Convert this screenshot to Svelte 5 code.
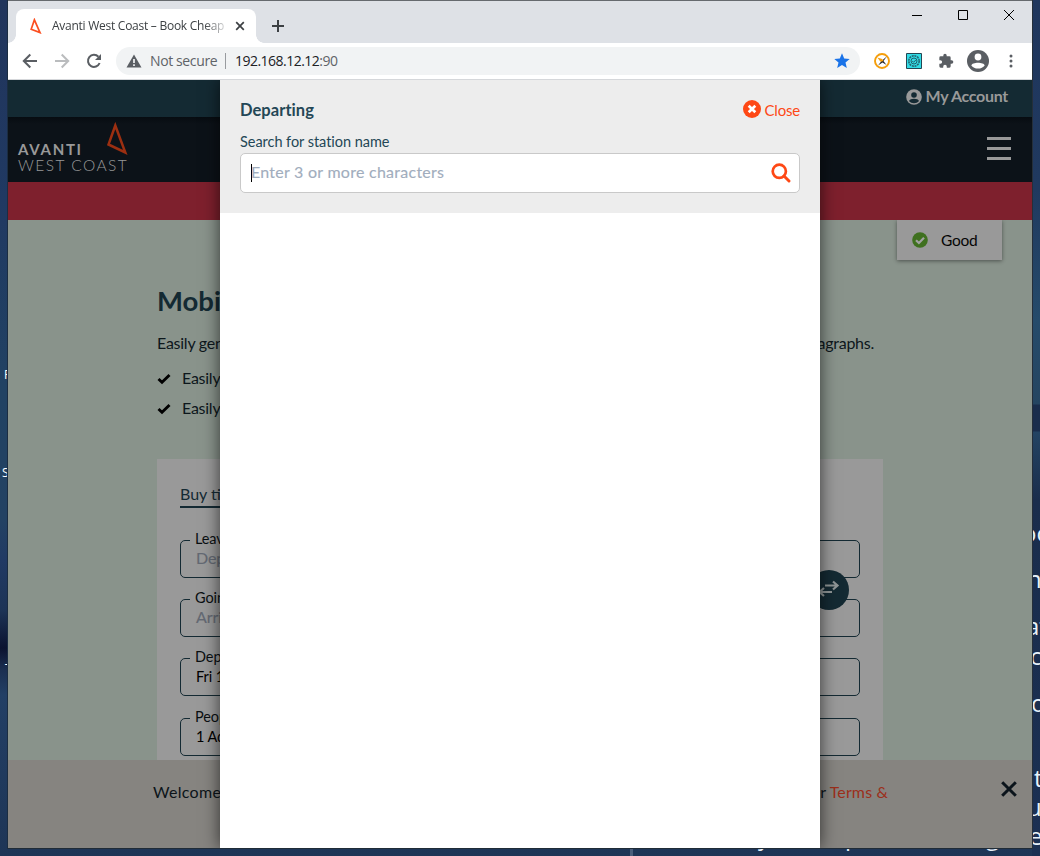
<script>
  const fields = [
    { label: 'Leaving', value: 'Departing', hint: true },
    { label: 'Going to', value: 'Arriving', hint: true },
    { label: 'Depart', value: 'Fri 18', hint: false },
    { label: 'People', value: '1 Adult', hint: false }
  ];
  const points = ['Easily g', 'Easily g'];
  const wallpaper = [
    { t: 'oo', x: 1022, y: 518 },
    { t: 'n', x: 1027, y: 564 },
    { t: 'at', x: 1026, y: 611 },
    { t: 'c', x: 1030, y: 641 },
    { t: 'o', x: 1031, y: 688 },
    { t: 't', x: 1034, y: 763 },
    { t: 'u', x: 1027, y: 792 },
    { t: 'e', x: 1029, y: 821 },
    { t: 'y', x: 758, y: 821 },
    { t: 'p', x: 845, y: 821 },
    { t: 'g', x: 986, y: 821 }
  ];
</script>

<div class="desktop">
  {#each wallpaper as w}
    <span class="wall" style="left:{w.x}px;top:{w.y}px">{w.t}</span>
  {/each}
  <span class="wall small" style="left:4px;top:367px">F</span>
  <span class="wall small" style="left:2px;top:465px">S</span>
  <span class="wall small" style="left:5px;top:661px">T</span>
  <i class="bar"></i>

  <div class="window">
    <div class="tabs">
      <div class="tab">
        <svg width="12" height="16" viewBox="0 0 12 16"><path d="M4.4 1.8L1.2 11.2L10 14.6Z" fill="none" stroke="#fb4f21" stroke-width="1.7" /></svg>
        <span class="tabtitle">Avanti West Coast – Book Cheap</span>
        <svg class="tabx" width="10" height="10" viewBox="0 0 10 10"><path d="M1.2 1.2L8.8 8.8M8.8 1.2L1.2 8.8" stroke="#3c4043" stroke-width="1.7" /></svg>
      </div>
      <svg class="plus" width="12" height="12" viewBox="0 0 12 12"><path d="M6 0V12M0 6H12" stroke="#3c4043" stroke-width="2" /></svg>
      <div class="controls">
        <svg width="11" height="11" viewBox="0 0 11 11"><path d="M0 5.5H10" stroke="#000" /></svg>
        <svg width="11" height="11" viewBox="0 0 11 11"><path d="M.5 .5H9.5V9.5H.5Z" fill="none" stroke="#000" /></svg>
        <svg width="11" height="11" viewBox="0 0 11 11"><path d="M0 0L10 10M10 0L0 10" stroke="#000" /></svg>
      </div>
    </div>

    <div class="toolbar">
      <svg class="nav" width="16" height="16" viewBox="0 0 16 16"><path d="M15 8H2M8.3 1.5L1.8 8L8.3 14.5" fill="none" stroke="#5a5e63" stroke-width="2" /></svg>
      <svg class="nav" width="16" height="16" viewBox="0 0 16 16"><path d="M1 8H14M7.7 1.5L14.2 8L7.7 14.5" fill="none" stroke="#babcbe" stroke-width="2" /></svg>
      <svg class="nav" width="16" height="16" viewBox="0 0 16 16"><path d="M13.6 10A6 6 0 1 1 12.4 3.8" fill="none" stroke="#5a5e63" stroke-width="2" /><path d="M15 1V7H9Z" fill="#5a5e63" /></svg>
      <div class="address">
        <svg width="16" height="14" viewBox="0 0 16 14"><path d="M8 .5L15.5 13.5H.5Z" fill="#5a5e63" /><path d="M8 5V9M8 10.3V12" stroke="#f1f3f4" stroke-width="1.7" /></svg>
        <span class="secure">Not secure</span>
        <i></i>
        <span class="url">192.168.12.12<em>:90</em></span>
        <svg class="star" width="16" height="16" viewBox="0 0 16 16"><path d="M8 .3L10.200 5.500L15.700 5.900L11.500 9.600L12.800 15L8 12.100L3.200 15L4.500 9.600L.3 5.900L5.800 5.500Z" fill="#1a73e8" /></svg>
      </div>
      <svg class="ext1" width="16" height="16" viewBox="0 0 16 16"><circle cx="8" cy="8" r="7" fill="#fff" stroke="#f59e0b" stroke-width="1.9" /><path d="M13 3.200L9.500 8L12.500 12L8.500 9.500L4 12.500L7.500 8Z" fill="#27272c" /><path d="M3.300 4.600L8.200 6L9.500 8L6.500 8.800Z" fill="#f59e0b" /></svg>
      <svg class="ext2" width="16" height="16" viewBox="0 0 16 16"><path d="M.5 .5H15.5V15.5H.5Z" fill="#31dbe5" stroke="#244653" /><circle cx="8" cy="8" r="5.200" fill="none" stroke="#24606c" stroke-width="1.500" stroke-dasharray="2 .7" /><circle cx="8" cy="8" r="3" fill="none" stroke="#24606c" /><path d="M6.3 8L7.6 9.3L10 6.8" fill="none" stroke="#24606c" /></svg>
      <svg class="puzzle" width="16" height="16" viewBox="0 0 24 24"><path d="M20.5 11H19V7a2 2 0 0 0-2-2h-4V3.500a2.500 2.500 0 0 0-5 0V5H4a2 2 0 0 0-2 2v3.800h1.500a2.700 2.700 0 0 1 0 5.400H2V20a2 2 0 0 0 2 2h3.800v-1.500a2.700 2.700 0 0 1 5.400 0V22H17a2 2 0 0 0 2-2v-4h1.500a2.500 2.500 0 0 0 0-5z" fill="#5a5e63" /></svg>
      <svg class="avatar" width="22" height="22" viewBox="0 0 22 22"><circle cx="11" cy="11" r="11" fill="#5a5e63" /><circle cx="11" cy="7" r="3.400" fill="#fff" /><path d="M4.300 15.500C5 11.700 17 11.700 17.700 15.500C15 19.600 7 19.600 4.300 15.500Z" fill="#fff" /></svg>
      <svg class="dots" width="4" height="14" viewBox="0 0 4 14"><circle cx="2" cy="2" r="1.500" fill="#5a5e63" /><circle cx="2" cy="7" r="1.500" fill="#5a5e63" /><circle cx="2" cy="12" r="1.500" fill="#5a5e63" /></svg>
    </div>

    <div class="page">
      <div class="account">
        <svg width="16" height="16" viewBox="0 0 16 16"><circle cx="8" cy="8" r="7.800" fill="#999" /><circle cx="8" cy="6" r="2.800" fill="#142a33" /><path d="M3 12C4 9 12 9 13 12C10.500 15 5.500 15 3 12Z" fill="#142a33" /></svg>
        <span>My Account</span>
      </div>
      <header>
        <div class="brand">
          <span class="avanti">AVANTI</span>
          <span class="west">WEST COAST</span>
          <svg width="22" height="34" viewBox="0 0 22 34"><path d="M9.300 3.500L2.500 22.500L19.300 30.500Z" fill="none" stroke="#9c2f11" stroke-width="2.500" /></svg>
        </div>
        <div class="burger"><i></i><i></i><i></i></div>
      </header>
      <div class="alert"></div>
      <main>
        <div class="status">
          <svg width="16" height="16" viewBox="0 0 16 16"><circle cx="8" cy="8" r="7.800" fill="#3f701f" /><path d="M4 8.200L6.900 11L12 5.800" fill="none" stroke="#a2a2a2" stroke-width="2.200" /></svg>
          <span>Good</span>
        </div>
        <h1>Mobil</h1>
        <p class="intro"><span>Easily gen</span><span>paragraphs.</span></p>
        <ul>
          {#each points as p}
            <li><svg width="14" height="12" viewBox="0 0 14 12"><path d="M1.500 6L5 9.300L12.500 2" fill="none" stroke="#000" stroke-width="2.900" /></svg><span>{p}</span></li>
          {/each}
        </ul>
        <section class="card">
          <h2>Buy tick</h2>
          {#each fields as f}
            <div class="field"><span class="label">{f.label}</span><span class="value" class:hint={f.hint}>{f.value}</span></div>
          {/each}
          <div class="swap"><svg width="22" height="18" viewBox="0 0 22 18"><path d="M7 5.500H19M15 1.500L19.500 5.500L15 9.500M14 12H2M6 8L1.500 12L6 16" fill="none" stroke="#8f9596" stroke-width="2.200" /></svg></div>
        </section>
      </main>
      <footer>
        <span class="welcome">Welcome t</span>
        <span class="terms"><b>or</b> Terms &amp;</span>
        <svg width="18" height="18" viewBox="0 0 18 18"><path d="M2.200 2.200L15.800 15.800M15.800 2.200L2.200 15.800" stroke="#0b141b" stroke-width="3" /></svg>
      </footer>

      <div class="modal">
        <div class="panel">
          <div class="top">
            <strong>Departing</strong>
            <div class="close">
              <svg width="18" height="18" viewBox="0 0 18 18"><circle cx="9" cy="9" r="9" fill="#fe4815" /><path d="M5.700 5.700L12.300 12.300M12.300 5.700L5.700 12.300" stroke="#fff" stroke-width="2.700" /></svg>
              <span>Close</span>
            </div>
          </div>
          <div class="caption">Search for station name</div>
          <div class="search">
            <i></i><span>Enter 3 or more characters</span>
            <svg width="20" height="20" viewBox="0 0 20 20"><circle cx="8.300" cy="8.300" r="6.600" fill="none" stroke="#fe4815" stroke-width="2.700" /><path d="M13 13L18 18" stroke="#fe4815" stroke-width="2.900" stroke-linecap="round" /></svg>
          </div>
        </div>
      </div>
    </div>
  </div>
</div>

<style>
  * { box-sizing: border-box; }
  svg { display: block; flex: none; }
  .desktop { position: relative; width: 1040px; height: 856px; overflow: hidden; font-family: Lato, sans-serif; background: linear-gradient(#21355c 0, #203962 200px, #214263 390px, #234263 520px, #213a64 560px, #1d3456 610px, #0b1330 648px, #1b2f51 670px, #223f65 695px, #1e3556 856px); }
  .desktop::after { content: ''; position: absolute; left: 1032px; top: 0; width: 8px; height: 856px; background: linear-gradient(#1f365d 0, #20395f 190px, #254b6b 320px, #254561 404px, #1a2d4c 405px, #1a2d4c 431px, #244463 432px, #1a2d4c 500px, #1b3053 856px); }
  .wall { position: absolute; z-index: 1; font: 24px/30px 'Open Sans', sans-serif; color: #e8f2fa; }
  .wall.small { font-size: 12px; line-height: 16px; color: #fff; }
  .bar { position: absolute; left: 630px; top: 848px; width: 3px; height: 8px; background: #4a5e7b; }
  .window { position: absolute; z-index: 2; left: 8px; top: 0; width: 1024px; height: 849px; overflow: hidden; border-top: 1px solid #666a6e; border-bottom: 1px solid #202c37; box-shadow: -1px 0 #1b2d42, 1px 0 #252f3a; display: flex; flex-direction: column; background: #fff; }

  .tabs { height: 42px; display: flex; background: #dee1e6; padding-left: 8px; flex: none; }
  .tab { position: relative; width: 240px; height: 34px; margin-top: 8px; border-radius: 8px 8px 0 0; background: #fff; display: flex; align-items: center; padding-left: 14px; }
  .tab::before, .tab::after { content: ''; position: absolute; bottom: 0; width: 8px; height: 8px; }
  .tab::before { left: -8px; background: radial-gradient(circle at 0 0, #dee1e6 7.500px, #fff 8px); }
  .tab::after { right: -8px; background: radial-gradient(circle at 100% 0, #dee1e6 7.500px, #fff 8px); }
  .tabtitle { margin-left: 10px; width: 173px; font: 12px/16px 'Open Sans', sans-serif; letter-spacing: -.26px; color: #3c4043; white-space: nowrap; overflow: hidden; -webkit-mask-image: linear-gradient(90deg, #000 152px, transparent 178px); mask-image: linear-gradient(90deg, #000 152px, transparent 178px); }
  .tabx { margin-left: 10px; }
  .plus { margin: 19px 0 0 16px; }
  .controls { margin-left: auto; display: flex; gap: 35px; padding: 9px 17px 0 0; }

  .toolbar { height: 37px; border-bottom: 1px solid #d5d7da; display: flex; align-items: center; padding-left: 14px; flex: none; }
  .nav { margin-right: 16px; }
  .address { width: 744px; height: 28px; margin-left: -2px; border-radius: 14px; background: #f1f3f4; display: flex; align-items: center; padding-left: 10px; font: 14px/20px 'Open Sans', sans-serif; }
  .secure { width: 67px; margin-left: 8px; color: #5f6368; white-space: nowrap; letter-spacing: -.38px; }
  .address i { width: 1px; height: 16px; margin: 0 9px 0 8px; background: #989b9f; }
  .url { color: #202124; letter-spacing: -.52px; }
  .url em { font-style: normal; color: #5f6368; }
  .star { margin-left: auto; margin-right: 10px; }
  .ext1 { margin-left: 14px; }
  .ext2, .puzzle { margin-left: 16px; }
  .avatar { margin-left: 13px; }
  .dots { margin-left: 19.500px; }

  .page { position: relative; height: 768px; display: flex; flex-direction: column; }
  .account { height: 37px; flex: none; background: #142a33; display: flex; align-items: center; justify-content: flex-end; gap: 4px; padding: 0 24px 3px 0; color: #999; font-size: 16px; font-weight: 700; letter-spacing: -.3px; }
  .account span { margin-top: -3px; }
  header { height: 65px; flex: none; background: linear-gradient(#070c11, #0c1218 7px); display: flex; justify-content: space-between; padding: 0 21px 0 10px; }
  .brand { position: relative; width: 112px; padding-top: 24px; display: flex; flex-direction: column; color: #999; white-space: nowrap; }
  .brand svg { position: absolute; left: 88px; top: 5px; }
  .avanti { font-size: 15px; line-height: 16px; font-weight: 700; letter-spacing: 1.700px; }
  .west { font-size: 15.500px; line-height: 16px; font-weight: 300; letter-spacing: 1.480px; }
  .burger { width: 24px; padding-top: 20px; display: flex; flex-direction: column; gap: 7px; }
  .burger i { height: 3px; background: #999; flex: none; }
  .alert { height: 38px; flex: none; background: #7e202d; }
  main { position: relative; height: 540px; flex: none; background: #89938b; padding: 65px 149px 0; overflow: hidden; }
  .status { position: absolute; right: 30px; top: 0; width: 105px; height: 40px; background: #999; box-shadow: 0 1px 4px rgba(0,0,0,.45); display: flex; align-items: center; gap: 13px; padding-left: 15px; font-size: 15.500px; letter-spacing: -.3px; color: #050505; }
  h1 { margin: 0; font-size: 27.500px; line-height: 32px; color: #142a33; }
  .intro { margin: 16px 9px 0 0; display: flex; justify-content: space-between; font-size: 16px; line-height: 20px; letter-spacing: -.25px; color: #0d171c; }
  ul { list-style: none; margin: 10px 0 0; padding: 0; }
  li { height: 30px; display: flex; align-items: center; gap: 11px; font-size: 16px; letter-spacing: -.25px; color: #0d171c; }
  li svg { margin-top: 1px; }
  li span { margin-top: -2px; }
  .card { position: relative; margin-top: 36px; height: 330px; background: #999; padding: 24px 23px 0; }
  h2 { margin: 0 0 32px; width: 60px; height: 25px; border-bottom: 2px solid #142a33; font-size: 16px; line-height: 21px; font-weight: 400; color: #142a33; white-space: nowrap; }
  .field { position: relative; height: 38px; margin-bottom: 21.200px; border: 1px solid #142a33; border-radius: 5px; padding: 8px 15px; font-size: 14.500px; line-height: 20px; color: #000; white-space: nowrap; }
  .label { position: absolute; left: 9px; top: -12px; padding: 0 5px; background: #999; color: #0a0f12; letter-spacing: -.1px; }
  .value { display: block; letter-spacing: -.1px; }
  .value.hint { margin-top: -1px; font-size: 16px; color: #646973; -webkit-text-stroke: .15px #646973; }
  .swap { position: absolute; left: 652px; top: 111px; width: 40px; height: 40px; border-radius: 50%; background: #142a33; display: flex; align-items: center; justify-content: center; }
  .swap svg { margin-top: -2px; }
  footer { height: 88px; flex: none; background: #868480; display: flex; align-items: flex-start; padding: 21px 14px 0 145px; font-size: 16px; line-height: 22px; letter-spacing: .15px; color: #0c1419; }
  .welcome { width: 80px; white-space: nowrap; letter-spacing: .3px; }
  .terms { margin-left: 578px; color: #9c2f1b; }
  .terms b { color: #0c1419; font-weight: 400; }
  footer svg { margin-left: auto; margin-top: -1px; }

  .modal { position: absolute; left: 212px; top: 0; width: 600px; height: 768px; background: #fff; box-shadow: 0 0 16px rgba(0,0,0,.65); clip-path: inset(0 -30px); }
  .panel { height: 133px; background: #ededed; padding: 19px 20px 0; color: #244756; }
  .top { height: 22px; display: flex; justify-content: space-between; align-items: center; }
  .top strong { font-size: 16.500px; letter-spacing: .05px; }
  .close { display: flex; align-items: center; gap: 4px; font-size: 15px; letter-spacing: -.2px; color: #fe4815; }
  .close svg { margin-top: -2px; }
  .close span { margin-top: -1px; }
  .caption { margin-top: 11px; height: 21px; font-size: 14.500px; line-height: 20px; letter-spacing: -.04px; }
  .search { height: 40px; border: 1px solid #c9c9c9; border-radius: 5px; background: #fff; display: flex; align-items: center; padding: 0 8px 0 10px; font-size: 16px; letter-spacing: .26px; color: #a1adbd; }
  .search i { width: 1px; height: 18px; margin-right: -1px; background: #000; }
  .search span { margin-top: -3px; -webkit-text-stroke: .12px #a1adbd; }
  .search svg { margin-left: auto; }
</style>
